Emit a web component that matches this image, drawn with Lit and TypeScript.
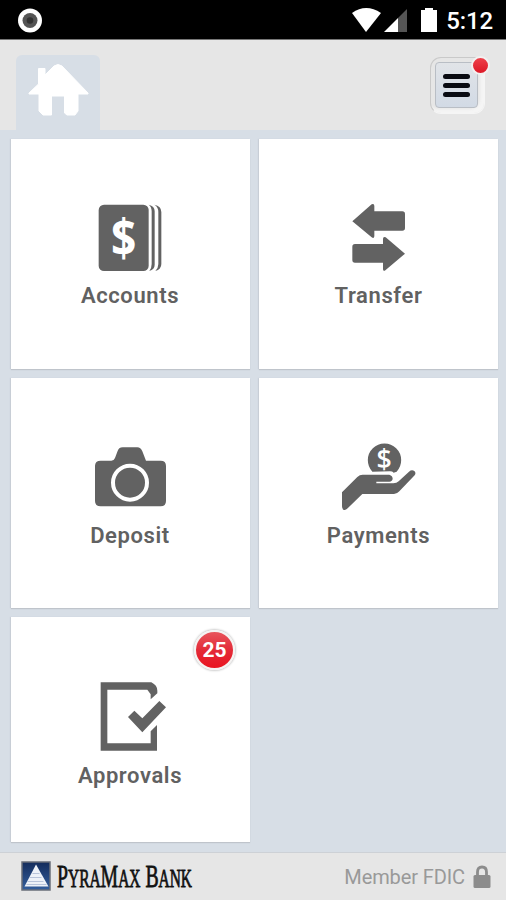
import { LitElement, html, svg, css } from "lit";
import { customElement, property } from "lit/decorators.js";

const icons: Record<string, unknown> = {
  accounts: svg`
    <rect x="86" y="44" width="150" height="199" rx="16"/>
    <path d="M236 44Q254 48 254 64V224Q254 238 238 243Q245 235 245 222V64Q245 51 236 44Z"/>
    <path d="M253 44Q274 48 274 66V222Q274 238 256 243Q265 234 265 222V66Q265 51 253 44Z"/>
    <text x="123" y="200" textLength="76" lengthAdjust="spacingAndGlyphs" class="dollar">$</text>`,
  transfer: svg`
    <path d="M97 94L155 43Q163 40 163 48V64H247Q255 64 255 72V114Q255 122 247 122H163V139Q162 147 155 142Z"/>
    <path d="M255 191L197 142Q189 139 189 147V162H105Q97 162 97 170V210Q97 218 105 218H189V238Q190 246 197 240Z"/>`,
  deposit: svg`
    <path d="M92 92H124Q132 92 135 84L142 65Q146 52 158 52H202Q212 52 217 64L228 92H272Q288 92 288 108V213Q288 229 272 229H92Q75 229 75 213V108Q75 92 92 92Z"/>
    <circle cx="180" cy="158" r="51" fill="none" stroke="#fff" stroke-width="12"/>`,
  payments: svg`
    <path d="M157 125A50 50 0 1 1 230 125L221 128Q217 124 210 124Z"/>
    <path d="M66 187L112 141Q119 134 128 134H208Q218 137 218 146Q217 154 208 155H169V160H220Q230 160 236 154L267 125Q275 118 283 123Q289 129 284 136L238 184Q231 192 222 192H127L83 235Q76 242 70 239Q66 237 66 229Z"/>
    <text x="192" y="117" text-anchor="middle" class="dollar coin">$</text>`,
  approvals: svg`
    <path d="M92 37H244Q262 46 262 62V70L242 88V73L232 59H112V220H242V184L261 165V242H92Z"/>
    <path d="M174 141L193 122L217 145L268 93L288 112L217 187Z"/>`,
};

@customElement("nav-tile")
class NavTile extends LitElement {
  @property() label = "";
  @property() icon = "";
  @property() count = "";
  @property({ type: Number }) shift = 0;

  static styles = css`
    :host { position: relative; display: flex; flex-direction: column; align-items: center; background: #fff; padding-top: 61px; box-sizing: border-box; box-shadow: 0 1px 1px #bfc4cb, -1px 0 1px #cbd1d9; }
    :host(.left) { padding-right: 1px; }
    :host(.middle) { padding-top: 62px; }
    :host(.last) { padding-top: 63px; }
    .icon { width: 120px; height: 80px; fill: #626262; flex: none; }
    .dollar { font: 700 155px "Open Sans", sans-serif; fill: #fff; }
    .coin { font-size: 80px; font-weight: 600; }
    .label { margin-top: 1px; font: 600 22px/30px Roboto, sans-serif; color: #616161; letter-spacing: .6px; }
    .badge { position: absolute; top: 13px; right: 15px; width: 37px; height: 36px; border-radius: 50%; background: linear-gradient(#e8555c, #e32b38 50%, #ea1420); border: 2px solid #f5f3f2; box-shadow: 0 0 2px 1px #cfcfcf; color: #fff; font: 700 21px/37px Roboto, sans-serif; text-align: center; }
  `;

  render() {
    return html`
      <svg class="icon" viewBox="${this.shift} 30 360 240">${icons[this.icon]}</svg>
      <span class="label">${this.label}</span>
      ${this.count ? html`<span class="badge">${this.count}</span>` : ""}
    `;
  }
}

@customElement("app-root")
class AppRoot extends LitElement {
  static styles = css`
    :host { display: flex; flex-direction: column; width: 506px; height: 900px; background: #d7dee6; font-family: Roboto, sans-serif; overflow: hidden; }
    .status { height: 40px; box-sizing: border-box; background: #000; border-bottom: 1px solid #777; flex: none; display: flex; align-items: center; justify-content: space-between; padding: 0 13px 0 17px; }
    .record { width: 26px; height: 26px; }
    .right { display: flex; align-items: center; }
    .signals { width: 90px; height: 30px; }
    .clock { color: #fff; font: 500 24px/40px Roboto, sans-serif; letter-spacing: -.1px; margin-left: 6px; padding-top: 2px; }
    .header { height: 90px; flex: none; box-sizing: border-box; background: #e6e6e6; display: flex; justify-content: space-between; align-items: flex-start; padding: 15px 21px 0 16px; }
    .home { width: 84px; height: 75px; border-radius: 6px 6px 0 0; background: #d7dee6; }
    .menu { position: relative; width: 55px; height: 57px; margin-top: 2px; box-sizing: border-box; border-radius: 11px; background: #e6e6e6; border: 1px solid; border-color: #c9c9c9 #f5f5f5 #f5f5f5 #c9c9c9; padding: 4px; box-shadow: inset -4px -4px 3px #f5f5f5; }
    .button { width: 43px; height: 46px; box-sizing: border-box; border-radius: 4px; border: 1px solid #b9bec5; background: linear-gradient(#e1e4e8, #d2dae5); display: flex; flex-direction: column; align-items: center; justify-content: center; gap: 4px; padding-top: 1px; }
    .bar { width: 27px; height: 5px; border-radius: 2.5px; background: #090b12; }
    .dot { position: absolute; right: -6px; top: -2px; width: 15px; height: 15px; border: 2px solid #f3f0f0; border-radius: 50%; background: linear-gradient(#ee414b, #dd1826); }
    .grid { flex: 1; display: grid; grid-template-columns: 239px 239px; grid-template-rows: 230px 230px 225px; gap: 9px; padding: 9px 8px 0 11px; }
    .footer { height: 48px; flex: none; box-sizing: border-box; border-top: 1px solid #cdd1d6; background: #e6e6e6; display: flex; align-items: center; justify-content: space-between; padding: 0 15px 0 21px; }
    .brand { display: flex; align-items: center; gap: 6px; height: 36px; }
    .emblem { width: 30px; height: 30px; margin-top: -2px; }
    .name { width: 140px; height: 36px; overflow: visible; font-family: "Liberation Serif", serif; fill: #111; stroke: #111; stroke-width: .8px; }
    .cap { font-size: 32px; }
    .small { font-size: 25px; }
    .member { display: flex; align-items: center; gap: 8px; color: #999; font-size: 20px; letter-spacing: -.1px; padding-top: 1px; }
    .lock { width: 18px; height: 24px; }
  `;

  render() {
    return html`
      <div class="status">
        <svg class="record" viewBox="0 0 26 26"><circle cx="13" cy="13.500" r="12" fill="#fff"/><circle cx="13" cy="13.500" r="7.500" fill="#555"/><circle cx="13" cy="13.500" r="3.300" fill="#333"/></svg>
        <div class="right">
          <svg class="signals" viewBox="350 5 90 30">
            <path d="M352 13Q366 3 381 13L366 32Z" fill="#fff"/>
            <path d="M407 9V32H398V18Z" fill="#555"/>
            <path d="M384 32L398 18V32Z" fill="#fff"/>
            <path d="M421 10H425V8H433V10H437V32H421Z" fill="#fff"/>
          </svg>
          <span class="clock">5:12</span>
        </div>
      </div>
      <div class="header">
        <svg class="home" viewBox="0 0 84 75"><path fill="#fff" stroke="#fff" stroke-linejoin="round" d="M13 38L22.500 29V13.500H29V20L38 11Q42 8 46 11L72 38V39H62V56L59 60H51L48.500 58V41H35.500V60H27L23 56V39H13Z"/></svg>
        <div class="menu">
          <div class="button"><span class="bar"></span><span class="bar"></span><span class="bar"></span></div>
          <span class="dot"></span>
        </div>
      </div>
      <div class="grid">
        <nav-tile class="left" icon="accounts" label="Accounts"></nav-tile>
        <nav-tile icon="transfer" label="Transfer" shift="-3"></nav-tile>
        <nav-tile class="left middle" icon="deposit" label="Deposit"></nav-tile>
        <nav-tile class="middle" icon="payments" label="Payments" shift="-3"></nav-tile>
        <nav-tile class="left last" icon="approvals" label="Approvals" count="25"></nav-tile>
      </div>
      <div class="footer">
        <div class="brand">
          <svg class="emblem" viewBox="21.500 860.500 30 30">
            <defs><linearGradient id="sky" x1="0" x2="0" y1="0" y2="1"><stop stop-color="#142c5c"/><stop offset="1" stop-color="#345f9d"/></linearGradient></defs>
            <rect x="22.500" y="861.500" width="28" height="28" fill="url(#sky)" stroke="#6a6f79" stroke-width="1.500"/>
            <path d="M36.500 864L49 886H25Z" fill="#eef2f8"/>
            <path d="M33 873H40M30 877H42M28 881H44M27 884H47" stroke="#a9b8d2" stroke-width=".8"/>
          </svg>
          <svg class="name" viewBox="0 0 140 36"><text x="0" y="28" textLength="135" lengthAdjust="spacingAndGlyphs"><tspan class="cap">P</tspan><tspan class="small">YRA</tspan><tspan class="cap">M</tspan><tspan class="small">AX</tspan><tspan class="cap"> B</tspan><tspan class="small">ANK</tspan></text></svg>
        </div>
        <div class="member"><span>Member FDIC</span>
          <svg class="lock" viewBox="0 0 18 24"><path d="M4.500 12V7Q4.500 2 9 2T13.500 7V12" fill="none" stroke="#8c8c8c" stroke-width="2.800"/><rect x=".5" y="10" width="17" height="13" rx="1.500" fill="#8c8c8c"/></svg>
        </div>
      </div>
    `;
  }
}
